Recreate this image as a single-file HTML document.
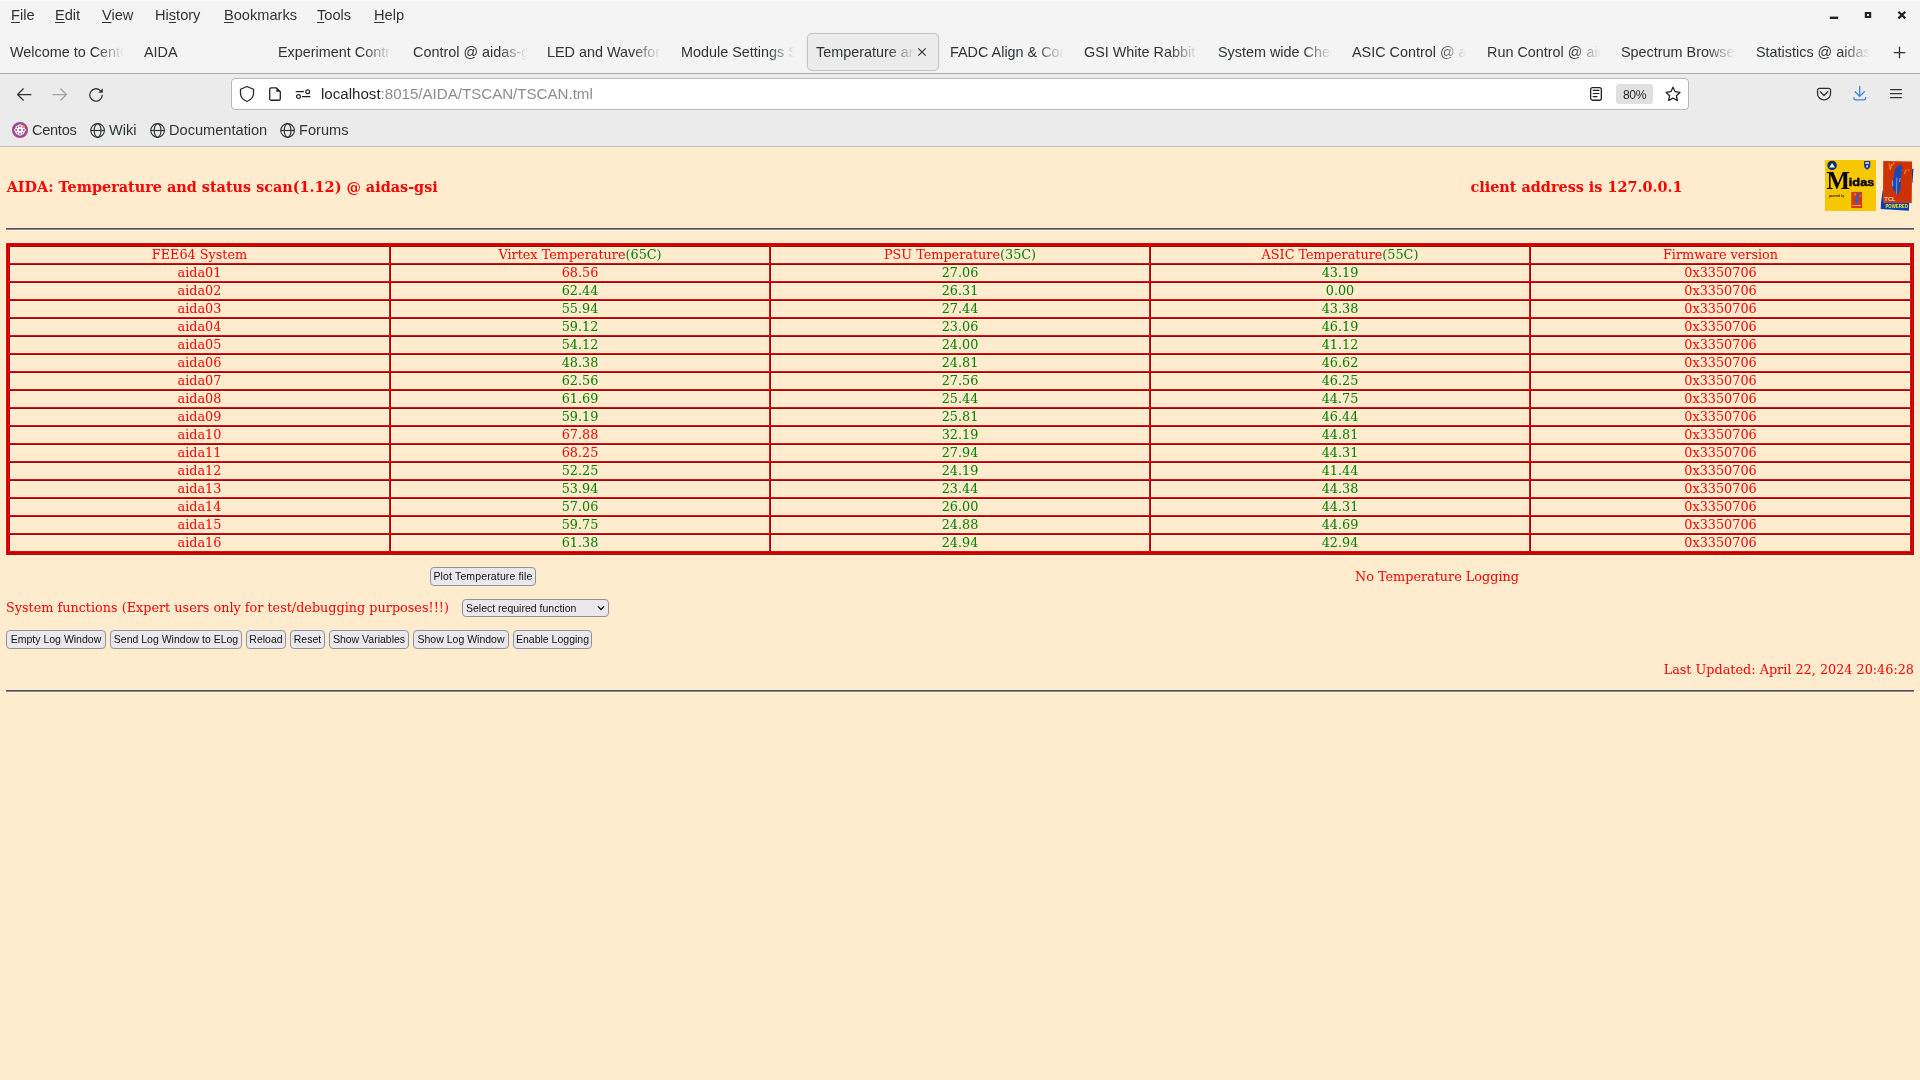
<!DOCTYPE html>
<html lang="en">
<head>
<meta charset="utf-8">
<title>Temperature and status scan</title>
<style>
*{box-sizing:border-box;margin:0;padding:0}
html,body{width:1920px;height:1080px;overflow:hidden;background:#ffebcd}
body{position:relative;font-family:"Liberation Sans","DejaVu Sans",sans-serif;color:#2e3436}
.abs{position:absolute}
/* ---------- browser chrome ---------- */
#chrome{position:absolute;left:0;top:0;width:1920px;height:147px;will-change:transform}
#navbg{position:absolute;left:0;top:74px;width:1920px;height:72px;background:#ebebeb}
#topstrip{position:absolute;left:0;top:0;width:1920px;height:73px;background:#f4f4f4;border-top:1px solid #fbfbfb}
#sep1{position:absolute;left:0;top:73px;width:1920px;height:1px;background:#ababab}
#sep2{position:absolute;left:0;top:146px;width:1920px;height:1px;background:#bdbdbd}
.menu{position:absolute;top:6px;font-size:14.6px;line-height:18px;color:#2e3436;white-space:nowrap}
.menu u{text-decoration-thickness:1px;text-underline-offset:2px}
.tab{position:absolute;top:42px;height:20px;width:116px;font-size:14.4px;line-height:20px;white-space:nowrap;overflow:hidden;color:#2e3436;
 -webkit-mask-image:linear-gradient(to right,#000 0,#000 86px,transparent 114px);mask-image:linear-gradient(to right,#000 0,#000 86px,transparent 114px)}
#acttab{position:absolute;left:807px;top:33px;width:132px;height:38px;background:#ebebeb;border:1px solid #c6c6ce;border-radius:5px;box-shadow:0 0 2px rgba(0,0,0,.10)}
#urlbar{position:absolute;left:231px;top:78px;width:1458px;height:32px;background:#fff;border:1px solid #b9b9b6;border-radius:4px}
#url{position:absolute;left:321px;top:84px;font-size:15.1px;line-height:20px;white-space:nowrap;color:#8b8d8e}
#url b{font-weight:normal;color:#1d2326}
#zoom{position:absolute;left:1616px;top:84px;width:37px;height:20px;background:#e0e0e0;border-radius:3px;font-size:12.1px;letter-spacing:-0.4px;line-height:22px;text-align:center;color:#1d2326}
.bm{position:absolute;top:121px;font-size:14.6px;line-height:18px;white-space:nowrap;color:#2e3436}
svg{position:absolute;overflow:visible}
/* ---------- page ---------- */
#content{position:absolute;left:0;top:147px;width:1920px;height:933px;will-change:transform;font-family:"DejaVu Serif","Liberation Serif",serif;color:#f00}
.h{position:absolute;font-weight:bold;font-size:14.4px;line-height:18px;white-space:nowrap;color:#f00}
.hr{position:absolute;left:6px;width:1908px;height:2px;background:#4b4d53;border-bottom:1px solid #8e8e90;box-shadow:0 0 0 1px #fff4d9}
.t{position:absolute;font-size:12.8px;line-height:16px;white-space:nowrap;color:#f00}
#w1{position:absolute;left:6px;top:96px;width:1908px;height:312px;border:1px solid;border-color:#f00 #a80000 #a80000 #f00;box-shadow:0 0 0 1px #fff8dc}
#w2{width:100%;height:100%;border:1px solid;border-color:#a80000 #f00 #f00 #a80000}
#w3{width:100%;height:100%;border:1px solid;border-color:#f00 #a80000 #a80000 #f00}
table{border-collapse:separate;border-spacing:0;table-layout:fixed;width:1902px;height:306px;font-size:12.8px}
td,th{height:18px;line-height:15px;padding:0 0 1px 0;text-align:center;font-weight:normal;color:#f00;border:1px solid;border-color:#a80000 #f00 #f00 #a80000;white-space:nowrap;overflow:hidden;box-shadow:inset 0 0 0 1px #fff8dc}
.g{color:#008000}
.btn{position:absolute;height:19px;border:1px solid #8f8f9d;border-radius:4px;background:#e9e9ed;color:#111;font-family:"Liberation Sans","DejaVu Sans",sans-serif;font-size:10.5px;line-height:17px;text-align:center;white-space:nowrap}
</style>
</head>
<body>
<div id="chrome">
 <div id="topstrip"></div>
 <div id="navbg"></div>
 <div id="sep1"></div>
 <div id="sep2"></div>

 <span class="menu" style="left:11px"><u>F</u>ile</span>
 <span class="menu" style="left:55px"><u>E</u>dit</span>
 <span class="menu" style="left:102px"><u>V</u>iew</span>
 <span class="menu" style="left:155px">Hi<u>s</u>tory</span>
 <span class="menu" style="left:224px"><u>B</u>ookmarks</span>
 <span class="menu" style="left:317px"><u>T</u>ools</span>
 <span class="menu" style="left:374px"><u>H</u>elp</span>
 <svg style="left:1820px;top:0px" width="100" height="30" viewBox="1820 0 100 30"><path d="M1829.800 16.600h8.400v2.400h-8.400z" fill="#1d2326"/><path fill-rule="evenodd" d="M1864.800 12h6.400v5.900h-6.400zM1867 14.100v1.800h2v-1.800z" fill="#1d2326"/><path d="M1898.400 11.800l6.900 6.600m0-6.600l-6.900 6.600" stroke="#1d2326" stroke-width="2.200" fill="none"/></svg>
 <div id="acttab"></div>
 <span class="tab" style="left:10px">Welcome to CentOS</span>
 <span class="tab" style="left:144px">AIDA</span>
 <span class="tab" style="left:278px">Experiment Control @ aidas-gsi</span>
 <span class="tab" style="left:413px">Control @ aidas-gsi</span>
 <span class="tab" style="left:547px">LED and Waveform @ aidas-gsi</span>
 <span class="tab" style="left:681px">Module Settings Save @ aidas-gsi</span>
 <span class="tab" style="left:816px;width:100px;-webkit-mask-image:linear-gradient(to right,#000 0,#000 72px,transparent 100px);mask-image:linear-gradient(to right,#000 0,#000 72px,transparent 100px)">Temperature and status scan @ aidas-gsi</span>
 <span class="tab" style="left:950px">FADC Align &amp; Control @ aidas-gsi</span>
 <span class="tab" style="left:1084px">GSI White Rabbit @ aidas-gsi</span>
 <span class="tab" style="left:1218px">System wide Checks @ aidas-gsi</span>
 <span class="tab" style="left:1352px">ASIC Control @ aidas-gsi</span>
 <span class="tab" style="left:1487px">Run Control @ aidas-gsi</span>
 <span class="tab" style="left:1621px">Spectrum Browser @ aidas-gsi</span>
 <span class="tab" style="left:1756px">Statistics @ aidas-gsi</span>

 <svg style="left:917px;top:47px" width="10" height="10" viewBox="0 0 10 10"><path d="M1.300 1.300l7.400 7.400m0-7.400l-7.400 7.400" stroke="#2e3436" stroke-width="1.150" fill="none"/></svg>
 <svg style="left:1893px;top:46px" width="13" height="13" viewBox="0 0 13 13"><path d="M6.500 0.800v11.500M0.800 6.600h11.400" stroke="#2e3436" stroke-width="1.300" fill="none"/></svg>
 <svg style="left:16px;top:86px" width="16" height="16" viewBox="0 -0.5 16 16"><path d="M15 8H1.6M7.3 2.3L1.6 8l5.700 5.700" stroke="#2e3436" stroke-width="1.250" fill="none" stroke-linecap="round" stroke-linejoin="round"/></svg>
 <svg style="left:52px;top:86px" width="16" height="16" viewBox="0 -0.5 16 16"><path d="M1 8h13.400M8.700 2.300l5.700 5.700-5.700 5.700" stroke="#a3a4a5" stroke-width="1.250" fill="none" stroke-linecap="round" stroke-linejoin="round"/></svg>
 <svg style="left:88px;top:86px" width="16" height="16" viewBox="0 -0.5 16 16"><path d="M14.200 8.700A6.200 6.200 0 1 1 12.200 3.900" stroke="#2e3436" stroke-width="1.300" fill="none" stroke-linecap="round"/><path d="M14.800 1.700v4.500h-4.500z" fill="#2e3436"/></svg>
 <div id="urlbar"></div>
 <svg style="left:239px;top:86px" width="16" height="16" viewBox="0 0 16 16"><path d="M8 0.500L14.500 3.300V7.200C14.500 11 11.600 14 8 15.500C4.400 14 1.500 11 1.500 7.200V3.300Z" stroke="#1d2326" stroke-width="1.250" fill="none" stroke-linejoin="round"/></svg>
 <svg style="left:267px;top:86px" width="16" height="16" viewBox="0 0 16 16"><path d="M2.700 3.450a1.600 1.600 0 0 1 1.600-1.600H9.400L13.300 5.750V12.650a1.600 1.600 0 0 1-1.600 1.600H4.300a1.600 1.600 0 0 1-1.600-1.600Z" stroke="#1d2326" stroke-width="1.300" fill="none" stroke-linejoin="round"/><path d="M9.400 1.850V5.750H13.300Z" fill="#1d2326"/></svg>
 <svg style="left:295px;top:86px" width="16" height="16" viewBox="0 0 16 16"><path d="M1.200 5.600h7.300M7.400 10.600h7.500" stroke="#1d2326" stroke-width="1.250" fill="none" stroke-linecap="round"/><circle cx="12.700" cy="5.700" r="1.900" stroke="#1d2326" stroke-width="1.200" fill="none"/><circle cx="3.500" cy="10.600" r="1.900" stroke="#1d2326" stroke-width="1.200" fill="none"/></svg>
 <span id="url"><b>localhost</b>:8015/AIDA/TSCAN/TSCAN.tml</span>
 <svg style="left:1588px;top:86px" width="16" height="16" viewBox="0 0 16 16"><rect x="2.650" y="1.550" width="10.700" height="12.700" rx="2" stroke="#1d2326" stroke-width="1.300" fill="none"/><path d="M5.200 4.400h5.800M5.200 7.500h5.800M5.200 10.600h3.800" stroke="#1d2326" stroke-width="1.200" fill="none" stroke-linecap="round"/></svg>
 <div id="zoom">80%</div>
 <svg style="left:1665px;top:86px" width="16" height="16" viewBox="0 0 16 16"><path d="M8 1.200l2.100 4.500 4.900.600-3.600 3.400.950 4.850L8 12.150 3.650 14.550l.950-4.850-3.600-3.400 4.900-.600z" stroke="#1d2326" stroke-width="1.300" fill="none" stroke-linejoin="round"/></svg>
 <svg style="left:1816px;top:86px" width="16" height="16" viewBox="0 0 16 16"><path d="M1.550 4.200a1.850 1.850 0 0 1 1.850-1.850h9.300a1.850 1.850 0 0 1 1.850 1.850v3.250a6.500 6.500 0 0 1-13 0z" stroke="#2e3436" stroke-width="1.300" fill="none"/><path d="M4.300 5.750L8 9.500l3.800-3.750" stroke="#2e3436" stroke-width="1.300" fill="none" stroke-linecap="round" stroke-linejoin="round"/></svg>
 <svg style="left:1852px;top:86px" width="16" height="16" viewBox="0 0 16 16"><path d="M7.700 0.500v9.800M3.100 5.700l4.600 4.700 4.600-4.700M1.950 11.600v.750a1.600 1.600 0 0 0 1.600 1.600h8.400a1.600 1.600 0 0 0 1.600-1.600v-.750" stroke="#3a88e0" stroke-width="1.300" fill="none" stroke-linecap="round" stroke-linejoin="round"/></svg>
 <svg style="left:1888px;top:86px" width="16" height="16" viewBox="0 0 16 16"><path d="M2.650 3.600h10.700M2.650 7.650h10.700M2.650 11.700h10.700" stroke="#2e3436" stroke-width="1.300" fill="none" stroke-linecap="round"/></svg>
 <svg style="left:12px;top:122px" width="16" height="16" viewBox="0 0 16 16"><circle cx="8" cy="8" r="8" fill="#a1468f"/><g fill="none" stroke="#fff" stroke-width="1.100"><circle cx="8" cy="8" r="1.600"/><circle cx="8" cy="4.300" r="1.500"/><circle cx="8" cy="11.700" r="1.500"/><circle cx="4.300" cy="8" r="1.500"/><circle cx="11.700" cy="8" r="1.500"/><circle cx="5.400" cy="5.400" r="1.400"/><circle cx="10.600" cy="5.400" r="1.400"/><circle cx="5.400" cy="10.600" r="1.400"/><circle cx="10.600" cy="10.600" r="1.400"/></g><circle cx="11.200" cy="4.600" r="1.300" fill="#efa724"/></svg>
 <span class="bm" style="left:32px;letter-spacing:-0.3px">Centos</span>
 <span class="bm" style="left:109px">Wiki</span>
 <span class="bm" style="left:169px">Documentation</span>
 <span class="bm" style="left:299px">Forums</span>
 <svg style="left:89px;top:122px" width="16" height="16" viewBox="-0.6 -0.5 16 16"><g stroke="#2e3436" stroke-width="1.150" fill="none"><circle cx="8" cy="8" r="6.800"/><ellipse cx="8" cy="8" rx="3.400" ry="6.800"/><path d="M1.200 8h13.600"/></g></svg>
 <svg style="left:149px;top:122px" width="16" height="16" viewBox="-0.6 -0.5 16 16"><g stroke="#2e3436" stroke-width="1.150" fill="none"><circle cx="8" cy="8" r="6.800"/><ellipse cx="8" cy="8" rx="3.400" ry="6.800"/><path d="M1.200 8h13.600"/></g></svg>
 <svg style="left:279px;top:122px" width="16" height="16" viewBox="-0.6 -0.5 16 16"><g stroke="#2e3436" stroke-width="1.150" fill="none"><circle cx="8" cy="8" r="6.800"/><ellipse cx="8" cy="8" rx="3.400" ry="6.800"/><path d="M1.200 8h13.600"/></g></svg>
</div>
<div id="content">

 <div class="h" style="left:6.7px;top:31px">AIDA: Temperature and status scan(1.12) @ aidas-gsi</div>
 <div class="h" style="left:1470.5px;top:31px">client address is 127.0.0.1</div>
 <svg style="left:1820px;top:8px" width="100" height="60" viewBox="1820 155 100 60">
  <rect x="1825" y="160" width="51" height="51" fill="#f7c800"/>
  <circle cx="1832.1" cy="165.4" r="4.7" fill="#0b2a6b"/>
  <path d="M1829.2 167.6l2.900-4.600 2.900 4.600z" fill="#fff"/>
  <path d="M1864 161h6.300v4.500c0 2-1.400 3.400-3.150 4.300-1.750-.900-3.150-2.300-3.150-4.300z" fill="#1c3f9e"/>
  <path d="M1865.300 162.300h3.700v1.500h-3.700zM1866.200 165.500h1.900v1.800h-1.900z" fill="#e8ecf8"/>
  <text x="1826.400" y="188.600" font-family="'Liberation Serif','DejaVu Serif',serif" font-weight="bold" font-size="25.500" fill="#05050a" textLength="23.500" lengthAdjust="spacingAndGlyphs">M</text>
  <text x="1848.800" y="185.900" font-family="'Liberation Sans','DejaVu Sans',sans-serif" font-weight="bold" font-size="11.200" fill="#05050a" stroke="#05050a" stroke-width="0.45" textLength="25.600" lengthAdjust="spacingAndGlyphs">idas</text>
  <text x="1828.900" y="196.700" font-family="'Liberation Sans','DejaVu Sans',sans-serif" font-weight="bold" font-size="3.600" fill="#1a1400" textLength="15.300" lengthAdjust="spacingAndGlyphs">powered by</text>
  <rect x="1850.600" y="191.200" width="12.200" height="17.600" fill="#ffe000"/>
  <rect x="1851.200" y="191.800" width="11" height="16.400" fill="#d43a10"/>
  <path d="M1858 193.300c-2.300 1.200-3.100 5.200-2.300 10.200l1 1.400c.9-1.600 1.500-3.600 1.400-6.200l.7-.9-.5-.8c.2-1.300.6-2.500.9-3.700z" fill="#2f63c8"/>
  <path d="M1854.300 193.300l.9 2.800M1855.800 193.100l-.5 1.800M1860.700 194.700l-.8 1.900" stroke="#f6a623" stroke-width="0.600" fill="none"/>
  <path d="M1852.300 205.600h8.600" stroke="#f2b0a0" stroke-width="0.900"/>
  <path d="M1882.7 190l.8 0v12.500l25.600.300-.200 7.900-28.200-1.700.3-6.500z" fill="#0a3fb4"/>
  <path d="M1912 169l1.500-.500-1 14.500-.700 0z" fill="#0a3fb4"/>
  <path d="M1883.200 160.900l28.900.500-.400 41.600-28.600-.300z" fill="#cd3300"/>
  <path d="M1901.2 164.8C1897.5 165.5 1895 168 1894.4 172C1893.8 175 1893.8 177 1893.8 178.5L1892.3 179.5C1892 184 1892.6 188 1893.4 190.8L1894.6 190C1895.2 192.5 1896.2 194.3 1897.3 195.6C1898.8 193.5 1899.8 191.5 1900.2 189.3L1901 188L1900.3 186.5C1900.8 184 1900.8 182 1900.7 180C1900.9 177.5 1901.3 175.3 1901.9 173.3L1903 171.8L1899.8 171.2C1901.5 170 1902.6 168.7 1902.4 167.2C1902.3 166 1901.9 165.2 1901.2 164.8Z" fill="#1748b8"/>
  <path d="M1896.800 177.500l-.200 17" stroke="#dfe6f7" stroke-width="0.500" fill="none"/>
  <path d="M1892.500 180.500l.300 6M1900 178l-.500 4" stroke="#f3d9d0" stroke-width="0.600" fill="none"/>
  <path d="M1889.200 163.500l1.200 6.500M1892 164l-1.500 4.500M1894.300 162.300l-2 3.200" stroke="#f6a623" stroke-width="0.900" fill="none"/>
  <path d="M1906 169.500l-1.500 4.500M1908.800 169.300l-.800 1.600" stroke="#f6a623" stroke-width="0.900" fill="none"/>
  <text x="1884.300" y="200.500" font-family="'Liberation Sans','DejaVu Sans',sans-serif" font-weight="bold" font-size="5.600" fill="#f3dcd2" textLength="11.400" lengthAdjust="spacingAndGlyphs">TCL</text>
  <text x="1885.400" y="208" font-family="'Liberation Sans','DejaVu Sans',sans-serif" font-weight="bold" font-size="5" fill="#f2f020" textLength="22.500" lengthAdjust="spacingAndGlyphs">POWERED</text>
 </svg>
 <div class="hr" style="top:81px"></div>
 <div id="w1"><div id="w2"><div id="w3">
 <table>
  <colgroup><col style="width:381px"><col style="width:380px"><col style="width:380px"><col style="width:380px"><col style="width:381px"></colgroup>
  <tr><th>FEE64 System</th><th>Virtex Temperature<span class="g">(65C)</span></th><th>PSU Temperature<span class="g">(35C)</span></th><th>ASIC Temperature<span class="g">(55C)</span></th><th>Firmware version</th></tr>
  <tr><td>aida01</td><td>68.56</td><td class="g">27.06</td><td class="g">43.19</td><td>0x3350706</td></tr>
  <tr><td>aida02</td><td class="g">62.44</td><td class="g">26.31</td><td class="g">0.00</td><td>0x3350706</td></tr>
  <tr><td>aida03</td><td class="g">55.94</td><td class="g">27.44</td><td class="g">43.38</td><td>0x3350706</td></tr>
  <tr><td>aida04</td><td class="g">59.12</td><td class="g">23.06</td><td class="g">46.19</td><td>0x3350706</td></tr>
  <tr><td>aida05</td><td class="g">54.12</td><td class="g">24.00</td><td class="g">41.12</td><td>0x3350706</td></tr>
  <tr><td>aida06</td><td class="g">48.38</td><td class="g">24.81</td><td class="g">46.62</td><td>0x3350706</td></tr>
  <tr><td>aida07</td><td class="g">62.56</td><td class="g">27.56</td><td class="g">46.25</td><td>0x3350706</td></tr>
  <tr><td>aida08</td><td class="g">61.69</td><td class="g">25.44</td><td class="g">44.75</td><td>0x3350706</td></tr>
  <tr><td>aida09</td><td class="g">59.19</td><td class="g">25.81</td><td class="g">46.44</td><td>0x3350706</td></tr>
  <tr><td>aida10</td><td>67.88</td><td class="g">32.19</td><td class="g">44.81</td><td>0x3350706</td></tr>
  <tr><td>aida11</td><td>68.25</td><td class="g">27.94</td><td class="g">44.31</td><td>0x3350706</td></tr>
  <tr><td>aida12</td><td class="g">52.25</td><td class="g">24.19</td><td class="g">41.44</td><td>0x3350706</td></tr>
  <tr><td>aida13</td><td class="g">53.94</td><td class="g">23.44</td><td class="g">44.38</td><td>0x3350706</td></tr>
  <tr><td>aida14</td><td class="g">57.06</td><td class="g">26.00</td><td class="g">44.31</td><td>0x3350706</td></tr>
  <tr><td>aida15</td><td class="g">59.75</td><td class="g">24.88</td><td class="g">44.69</td><td>0x3350706</td></tr>
  <tr><td>aida16</td><td class="g">61.38</td><td class="g">24.94</td><td class="g">42.94</td><td>0x3350706</td></tr>
 </table>
 </div></div></div>
 <div class="btn" style="left:430px;top:420px;width:106px;letter-spacing:0.14px">Plot Temperature file</div>
 <div class="t" style="left:1355px;top:422px">No Temperature Logging</div>
 <div class="t" style="left:6px;top:453px">System functions (Expert users only for test/debugging purposes!!!)</div>
 <div class="btn" style="left:462px;top:452px;width:147px;height:18px;text-align:left;padding-left:3px;line-height:16px">Select required function<svg style="left:134px;top:5px" width="8" height="6" viewBox="0 0 8 6"><path d="M1 1.400l3 3.100L7 1.400" stroke="#111" stroke-width="1.250" fill="none"/></svg></div>
 <div class="btn" style="left:6px;top:483px;width:100px">Empty Log Window</div>
 <div class="btn" style="left:110px;top:483px;width:132px">Send Log Window to ELog</div>
 <div class="btn" style="left:246px;top:483px;width:40px">Reload</div>
 <div class="btn" style="left:290px;top:483px;width:35px">Reset</div>
 <div class="btn" style="left:329px;top:483px;width:80px">Show Variables</div>
 <div class="btn" style="left:413px;top:483px;width:96px">Show Log Window</div>
 <div class="btn" style="left:513px;top:483px;width:79px">Enable Logging</div>
 <div class="t" style="right:6px;top:515px">Last Updated: April 22, 2024 20:46:28</div>
 <div class="hr" style="top:543px"></div>
</div>
</body>
</html>
